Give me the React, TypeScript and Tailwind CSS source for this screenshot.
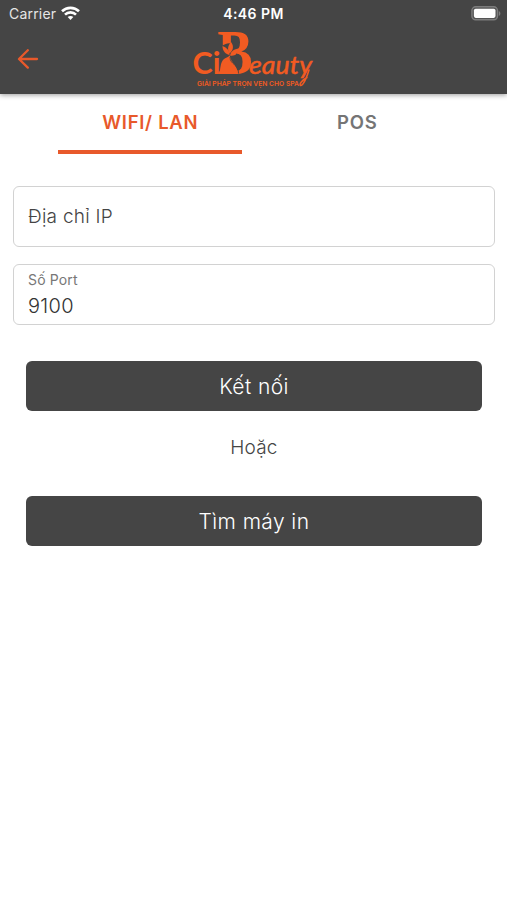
import type { ReactNode } from 'react';

function WifiIcon() {
  return (
    <svg width="19" height="15" viewBox="0 0 19 15" fill="none" stroke="#fff" strokeWidth="2.6">
      <path d="M1 5.3C5.7 0.7 13.3 0.7 18 5.3" />
      <path d="M4 8.6C7 5.6 12 5.6 15 8.6" />
      <path d="M6.7 11.1C8.2 9.5 10.8 9.5 12.3 11.1L9.5 14Z" fill="#fff" stroke="none" />
    </svg>
  );
}

function BatteryIcon() {
  return (
    <svg width="30" height="15" viewBox="0 0 30 15">
      <rect x="0.9" y="0.8" width="25.6" height="13" rx="3.8" fill="#555" stroke="#7d7d7d" strokeWidth="1.4" />
      <rect x="2.9" y="2.7" width="21.6" height="9.2" rx="1.8" fill="#fff" />
      <path d="M27.8 5V10C29.9 9 29.9 6 27.8 5Z" fill="#7d7d7d" />
    </svg>
  );
}

function BackArrow() {
  return (
    <svg width="22" height="20" viewBox="0 0 22 20" fill="none" stroke="#e8592b" strokeWidth="2.3" strokeLinecap="round" strokeLinejoin="round">
      <path d="M20 10H2.3M10.8 1.2L2 10L10.8 18.6" />
    </svg>
  );
}

function Logo() {
  return (
    <svg width="124" height="62" viewBox="192 28 124 62" fill="#f25b22" className="overflow-visible">
      <text x="192.500" y="74" fontFamily="Lato, sans-serif" fontSize="29.5" fontWeight="700" textLength="28" lengthAdjust="spacingAndGlyphs">Ci</text>
      <text x="217.5" y="73.5" fontFamily="'Liberation Serif', serif" fontSize="63" fontWeight="700" textLength="35" lengthAdjust="spacingAndGlyphs">B</text>
      {/* Leaf and stem over the B */}
      <path d="M221 47C226 42 233 42 237 47V66C234 62 231 60 230 57C228 60 226 62 221 62Z" fill="#454545" />
      <path d="M219 73.5C221 68 220 64 223 60C226 57 229 57 230 55C229 61 237 64 238 73.5Z" />
      <path d="M229.5 55C225 54 222.500 50.5 222.500 46C227 48 229.5 50 229.5 55Z" />
      <path d="M229.5 53.500C227 49.5 228 45.500 231 42C234 46 233.500 50 229.5 53.500Z" />
      <path d="M230 55.500C231 51 234 49 239 48.500C238 54 234.5 56.500 230 55.500Z" />
      <path d="M230 57C230 65 239 64 238.500 73.500" fill="none" stroke="#454545" strokeWidth="0.9" />
      <text x="249" y="73.5" fontFamily="Lato, sans-serif" fontSize="26" fontWeight="400" fontStyle="italic" stroke="#f25b22" strokeWidth="0.5" textLength="63" lengthAdjust="spacingAndGlyphs">eauty</text>
      {/* Swash that ends the wordmark */}
      <path d="M309 70C307 77 303 86 300.500 85.500C299 84.500 302 80 307 77.500" fill="none" stroke="#f25b22" strokeWidth="1.6" strokeLinecap="round" />
      <text x="197" y="86" fontFamily="Inter, sans-serif" fontSize="6.5" fontWeight="600" textLength="102" lengthAdjust="spacingAndGlyphs">GIẢI PHÁP TRỌN VẸN CHO SPA</text>
    </svg>
  );
}

function Header() {
  return (
    <header className="h-[94px] bg-[#454545] shadow-[0_1px_5px_rgba(0,0,0,0.4)]">
      <div className="grid h-7 grid-cols-3 items-center px-[9px] pb-px text-[14px] text-white">
        <div className="flex items-center gap-[5px]">
          <span className="tracking-[0.2px] text-[#e6e6e6]">Carrier</span>
          <WifiIcon />
        </div>
        <span className="text-center text-[14px] font-semibold tracking-[0.45px]">4:46 PM</span>
        <div className="-mr-[3px] flex justify-end">
          <BatteryIcon />
        </div>
      </div>
      <div className="grid h-[62px] grid-cols-[1fr_124px_1fr] items-center">
        <div className="pl-[17px]">
          <BackArrow />
        </div>
        <Logo />
      </div>
    </header>
  );
}

function Button({ children }: { children: ReactNode }) {
  return (
    <button className="h-[50px] w-full rounded-[6px] bg-[#454545] pt-[2px] text-[21px] font-light tracking-[0.4px] text-white">
      {children}
    </button>
  );
}

export default function App() {
  return (
    <div className="min-h-[900px] bg-white font-[Inter,sans-serif] text-[#444]">
      <Header />

      <nav className="flex px-[46px] text-[18.5px] font-semibold tracking-[0.7px]">
        <button className="flex h-[60px] flex-1 flex-col items-center text-[#e8592b]">
          <span className="flex h-14 items-center pt-px pl-px">WIFI/ LAN</span>
          <span className="h-[3.5px] w-[184px] shrink-0 bg-[#e8592b]" />
        </button>
        <button className="flex h-14 flex-1 items-center justify-center pt-px text-[#757575]">POS</button>
      </nav>

      <main className="pt-8 pr-3 pl-[13px]">
        <div className="flex h-[61px] items-center rounded-[6px] border border-[#d2d2d2] px-[14px] pt-[2px] text-[19px] font-light tracking-[0.25px]">
          Địa chỉ IP
        </div>
        <div className="mt-[17px] flex h-[61px] flex-col rounded-[6px] border border-[#d2d2d2] px-[14px] pt-[5px]">
          <label className="text-[14px] leading-5 tracking-[0.15px] text-[#777]">Số Port</label>
          <span className="mt-[2px] text-[20px] leading-7 font-[350] tracking-[0.3px] text-[#333]">9100</span>
        </div>

        <div className="px-[13px] pt-9">
          <Button>Kết nối</Button>
          <p className="flex h-[85px] items-center justify-center pb-[10px] text-[19px] font-light tracking-[0.2px]">Hoặc</p>
          <Button>Tìm máy in</Button>
        </div>
      </main>
    </div>
  );
}
